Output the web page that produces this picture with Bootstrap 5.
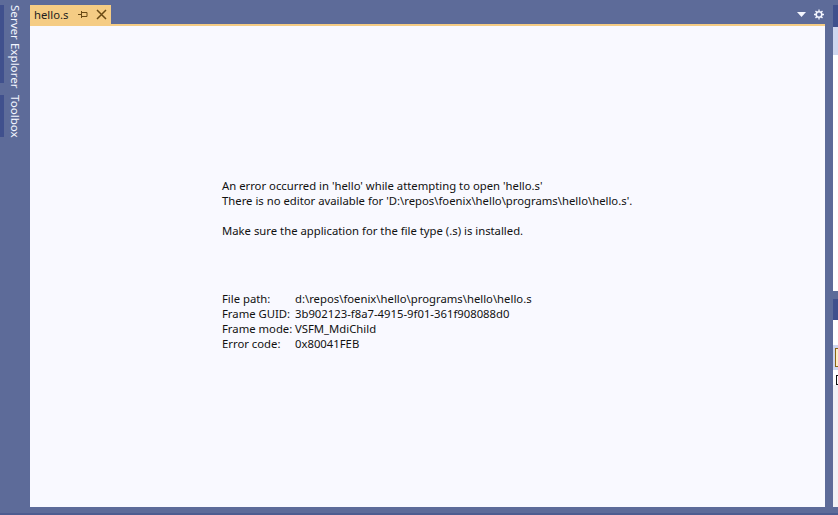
<!DOCTYPE html>
<html lang="en">
<head>
<meta charset="utf-8">
<title>hello.s</title>
<link href="https://cdn.jsdelivr.net/npm/bootstrap@5.3.0/dist/css/bootstrap.min.css" rel="stylesheet">
<style>
html,body{height:100%;margin:0;overflow:hidden}
body{background:#5d6b99;font-family:"Noto Sans","Open Sans",sans-serif;font-size:11.3px;color:#111}
.shell{width:838px;height:513px}
.footline{width:838px;height:2px;background:#4d5c90}
.rail{width:30px;flex:none;padding-top:5px}
.railtab{width:30px;display:flex}
.railmark{width:4px;background:#40508d;flex:none}
.railtext{writing-mode:vertical-rl;color:#f4f6ff;padding:0 0 0 3px;line-height:16px;font-size:11.6px;white-space:nowrap}
.rt1{height:78px;margin-bottom:12px}
.rt2{height:42px}
.mainc{width:795px;flex:none}
.tabrow{height:19px;margin-top:5px}
.doctab{width:81px;background:#f5cc84;color:#1e1e1e;line-height:19px;padding-left:4px;font-size:11.3px}
.pinicon{margin-left:10px}
.closeicon{margin-left:8px}
.wellicons{padding-right:1px}
.goldline{height:2px;background:#f5cc84}
.pane{height:481px;background:#f9f9ff;padding:152px 0 0 192px;line-height:15px}
.gap1{height:15px}
.gap2{height:53px}
.infolabel{width:73px;flex:none;white-space:nowrap}
.side{width:13px;flex:none;padding-left:8px}
.sideinner{height:507px;background:#fff}
.s-top{height:5px;background:#5d6b99}
.s-head{height:22px;background:#40508d}
.s-pale{height:28px;background:#cfd6ee}
.s-white1{height:236px}
.s-bar{height:8px;background:#5d6b99}
.s-head2{height:21px;background:#40508d}
.s-white2{height:25px}
.s-sel{height:25px;background:#cfd6ee;padding:3px 0 3px 2px}
.s-goldbox{height:19px;background:#fdeec8;border:1px solid #8a6414;border-right:0}
.s-white3{height:5px}
.s-check{height:10px;padding-left:3px;background:#fff}
.s-checkbox{height:10px;border:1px solid #111;border-right:0}
.s-rest{height:122px;background:#f0f0f5}
</style>
</head>
<body>
<div class="shell d-flex">
  <div class="rail">
    <div class="railtab rt1"><div class="railmark"></div><div class="railtext">Server Explorer</div></div>
    <div class="railtab rt2"><div class="railmark"></div><div class="railtext">Toolbox</div></div>
  </div>
  <div class="mainc">
    <div class="tabrow d-flex justify-content-between">
      <div class="doctab d-flex align-items-center">
        <span>hello.s</span>
        <svg class="pinicon" width="10" height="9" viewBox="0 0 10 9"><path d="M0 4.5h3.5M3.500 1v7M3.500 2.500h5.500v4h-5.500" fill="none" stroke="#6a4a14"/></svg>
        <svg class="closeicon" width="11" height="11" viewBox="0 0 11 11"><path d="M1 1l9 9M10 1l-9 9" stroke="#6a4a14" stroke-width="1.5"/></svg>
      </div>
      <div class="wellicons d-flex align-items-center gap-2">
        <svg width="9" height="5" viewBox="0 0 9 5"><path d="M0 0h9L4.500 5z" fill="#f4f6ff"/></svg>
        <svg width="10" height="11" viewBox="0 0 10 10"><circle cx="5" cy="5" r="2.800" fill="none" stroke="#f4f6ff" stroke-width="1.600"/><path d="M5 0v2M5 8v2M0 5h2M8 5h2M1.500 1.500l1.300 1.300M7.200 7.200l1.300 1.300M8.500 1.500L7.200 2.800M2.800 7.200L1.500 8.500" stroke="#f4f6ff" stroke-width="1.300"/></svg>
      </div>
    </div>
    <div class="goldline"></div>
    <div class="pane">
      <div>An error occurred in 'hello' while attempting to open 'hello.s'</div>
      <div>There is no editor available for 'D:\repos\foenix\hello\programs\hello\hello.s'.</div>
      <div class="gap1"></div>
      <div>Make sure the application for the file type (.s) is installed.</div>
      <div class="gap2"></div>
      <div class="d-flex"><span class="infolabel">File path:</span><span>d:\repos\foenix\hello\programs\hello\hello.s</span></div>
      <div class="d-flex"><span class="infolabel">Frame GUID:</span><span>3b902123-f8a7-4915-9f01-361f908088d0</span></div>
      <div class="d-flex"><span class="infolabel">Frame mode:</span><span>VSFM_MdiChild</span></div>
      <div class="d-flex"><span class="infolabel">Error code:</span><span>0x80041FEB</span></div>
    </div>
  </div>
  <div class="side">
    <div class="sideinner">
      <div class="s-top"></div>
      <div class="s-head"></div>
      <div class="s-pale"></div>
      <div class="s-white1"></div>
      <div class="s-bar"></div>
      <div class="s-head2"></div>
      <div class="s-white2"></div>
      <div class="s-sel"><div class="s-goldbox"></div></div>
      <div class="s-white3"></div>
      <div class="s-check"><div class="s-checkbox"></div></div>
      <div class="s-rest"></div>
    </div>
  </div>
</div>
<div class="footline"></div>
</body>
</html>
